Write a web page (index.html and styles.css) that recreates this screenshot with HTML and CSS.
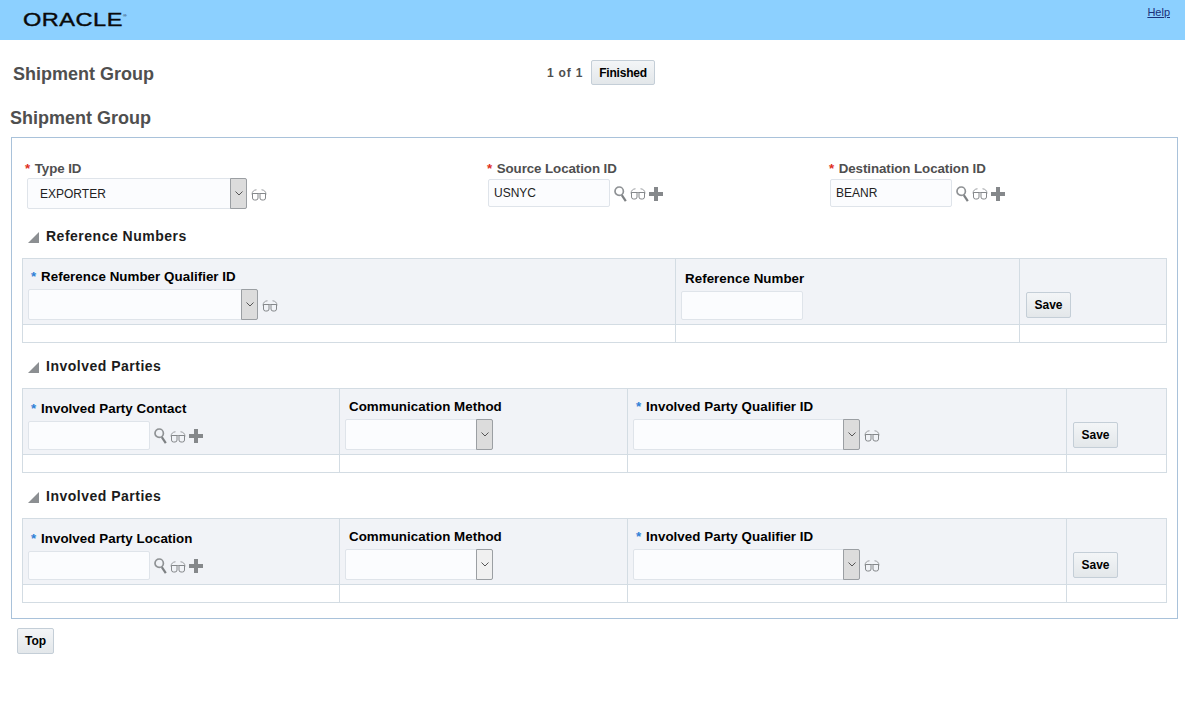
FILE: index.html
```html
<!DOCTYPE html>
<html lang="en">
<head>
<meta charset="utf-8">
<title>Shipment Group</title>
<link rel="stylesheet" href="styles.css">
</head>
<body>
<svg class="defs" width="0" height="0" aria-hidden="true">
  <defs>
    <symbol id="glasses" viewBox="0 0 16 12">
      <path d="M1 5.5C1 2.5 3 .8 5.5 .8M15 5.5C15 2.5 13 .8 10.5 .8M1 4.5h14" fill="none" stroke="#9a9da0" stroke-width="1"/>
      <path d="M1.5 4.5h5.5v4.5a2 2 0 0 1-2 2h-1.5a2 2 0 0 1-2-2zM9 4.5h5.5v4.5a2 2 0 0 1-2 2H11a2 2 0 0 1-2-2z" fill="none" stroke="#85888b" stroke-width="1"/>
    </symbol>
    <symbol id="search" viewBox="0 0 13 16">
      <circle cx="5.2" cy="5.2" r="4.2" fill="none" stroke="#8f9295" stroke-width="1.7"/>
      <path d="M7.8 9.2l4 6" stroke="#7d8083" stroke-width="2.2" fill="none"/>
    </symbol>
    <symbol id="plus" viewBox="0 0 14 14">
      <path d="M5 0h4v5h5v4H9v5H5V9H0V5h5z" fill="#85888b"/>
    </symbol>
    <symbol id="chev" viewBox="0 0 8 5">
      <path d="M.5 .5L4 4L7.5 .5" fill="none" stroke="#555" stroke-width="1"/>
    </symbol>
  </defs>
</svg>

<header class="topbar">
  <span class="logo">ORACLE<sup class="reg">®</sup></span>
  <a class="help" href="#">Help</a>
</header>

<div class="trainbar">
  <h1 class="page-title">Shipment Group</h1>
  <div class="pager">
    <span class="pager-text">1 of 1</span>
    <button class="btn btn-finish" type="button">Finished</button>
  </div>
</div>

<h2 class="section-title">Shipment Group</h2>

<main class="panel">
  <div class="form-row">
    <div class="field field-type">
      <label class="lbl"><span class="req">*</span> Type ID</label>
      <div class="ctl">
        <div class="select select-type"><span class="select-val">EXPORTER</span><span class="arrow dark"><svg class="chev"><use href="#chev"/></svg></span></div>
        <svg class="i-glasses"><use href="#glasses"/></svg>
      </div>
    </div>
    <div class="field field-src">
      <label class="lbl"><span class="req">*</span> Source Location ID</label>
      <div class="ctl">
        <div class="input input-top">USNYC</div>
        <svg class="i-search"><use href="#search"/></svg>
        <svg class="i-glasses"><use href="#glasses"/></svg>
        <svg class="i-plus"><use href="#plus"/></svg>
      </div>
    </div>
    <div class="field field-dst">
      <label class="lbl"><span class="req">*</span> Destination Location ID</label>
      <div class="ctl">
        <div class="input input-top">BEANR</div>
        <svg class="i-search"><use href="#search"/></svg>
        <svg class="i-glasses"><use href="#glasses"/></svg>
        <svg class="i-plus"><use href="#plus"/></svg>
      </div>
    </div>
  </div>

  <h3 class="sub"><span class="tri"></span>Reference Numbers</h3>
  <table class="grid grid-ref">
    <colgroup><col class="c-a"><col class="c-b"><col></colgroup>
    <tr class="head">
      <td>
        <div class="th"><span class="blue">*</span> Reference Number Qualifier ID</div>
        <div class="ctl">
          <div class="select select-lg"><span class="select-val"></span><span class="arrow dark"><svg class="chev"><use href="#chev"/></svg></span></div>
          <svg class="i-glasses"><use href="#glasses"/></svg>
        </div>
      </td>
      <td>
        <div class="th th-plain">Reference Number</div>
        <div class="ctl"><div class="input"></div></div>
      </td>
      <td><button class="btn btn-save" type="button">Save</button></td>
    </tr>
    <tr class="foot"><td></td><td></td><td></td></tr>
  </table>

  <h3 class="sub"><span class="tri"></span>Involved Parties</h3>
  <table class="grid grid-party">
    <colgroup><col class="c-1"><col class="c-2"><col class="c-3"><col></colgroup>
    <tr class="head">
      <td>
        <div class="th"><span class="blue">*</span> Involved Party Contact</div>
        <div class="ctl">
          <div class="input"></div>
          <svg class="i-search"><use href="#search"/></svg>
          <svg class="i-glasses"><use href="#glasses"/></svg>
          <svg class="i-plus"><use href="#plus"/></svg>
        </div>
      </td>
      <td>
        <div class="th th-method">Communication Method</div>
        <div class="ctl"><div class="select select-sm"><span class="select-val"></span><span class="arrow dark"><svg class="chev"><use href="#chev"/></svg></span></div></div>
      </td>
      <td>
        <div class="th th-qual"><span class="blue">*</span> Involved Party Qualifier ID</div>
        <div class="ctl">
          <div class="select select-md"><span class="select-val"></span><span class="arrow dark"><svg class="chev"><use href="#chev"/></svg></span></div>
          <svg class="i-glasses"><use href="#glasses"/></svg>
        </div>
      </td>
      <td><button class="btn btn-save" type="button">Save</button></td>
    </tr>
    <tr class="foot"><td></td><td></td><td></td><td></td></tr>
  </table>

  <h3 class="sub"><span class="tri"></span>Involved Parties</h3>
  <table class="grid grid-party">
    <colgroup><col class="c-1"><col class="c-2"><col class="c-3"><col></colgroup>
    <tr class="head">
      <td>
        <div class="th"><span class="blue">*</span> Involved Party Location</div>
        <div class="ctl">
          <div class="input"></div>
          <svg class="i-search"><use href="#search"/></svg>
          <svg class="i-glasses"><use href="#glasses"/></svg>
          <svg class="i-plus"><use href="#plus"/></svg>
        </div>
      </td>
      <td>
        <div class="th th-method">Communication Method</div>
        <div class="ctl"><div class="select select-sm"><span class="select-val"></span><span class="arrow light"><svg class="chev"><use href="#chev"/></svg></span></div></div>
      </td>
      <td>
        <div class="th th-qual"><span class="blue">*</span> Involved Party Qualifier ID</div>
        <div class="ctl">
          <div class="select select-md"><span class="select-val"></span><span class="arrow dark"><svg class="chev"><use href="#chev"/></svg></span></div>
          <svg class="i-glasses"><use href="#glasses"/></svg>
        </div>
      </td>
      <td><button class="btn btn-save" type="button">Save</button></td>
    </tr>
    <tr class="foot"><td></td><td></td><td></td><td></td></tr>
  </table>
</main>

<div class="bottom"><button class="btn" type="button">Top</button></div>
</body>
</html>
```

FILE: styles.css
```css
* { box-sizing: border-box; }
html, body { margin: 0; padding: 0; }
body {
  background: #fff;
  font-family: "Liberation Sans", Arial, sans-serif;
  font-size: 12px;
  color: #000;
  width: 1185px;
  height: 701px;
  overflow: hidden;
}
.defs { display: block; height: 0; }

.topbar {
  height: 40px;
  background: #8cd0ff;
  display: flex;
  justify-content: space-between;
  align-items: flex-start;
}
.logo {
  margin: 8px 0 0 23px;
  font-size: 19px;
  line-height: 24px;
  font-weight: 400;
  color: #0a0a0a;
  -webkit-text-stroke: .4px #0a0a0a;
  letter-spacing: .4px;
  transform: scaleX(1.24);
  transform-origin: left center;
  white-space: nowrap;
}
.reg { font-size: 4px; vertical-align: 9px; line-height: 0; -webkit-text-stroke: 0; }
.help {
  margin: 6px 15px 0 0;
  font-size: 11px;
  line-height: 13px;
  color: #1a2f7a;
  text-decoration: underline;
}

.trainbar {
  display: flex;
  padding: 20px 0 0 13px;
  height: 45px;
}
.page-title {
  margin: 0;
  width: 534px;
  font-size: 18px;
  line-height: 29px;
  height: 25px;
  font-weight: 700;
  color: #4f4f4f;
}
.pager { display: flex; align-items: center; gap: 8px; height: 25px; }
.pager-text {
  width: 36px;
  font-size: 12px;
  font-weight: 700;
  color: #4f4f4f;
  letter-spacing: .8px;
  white-space: nowrap;
}

.btn {
  height: 26px;
  padding: 0;
  border: 1px solid #c4ced7;
  border-radius: 2px;
  background: linear-gradient(#f3f5f7, #e3e7ea);
  font: 700 12px "Liberation Sans", Arial, sans-serif;
  color: #000;
}
.btn-finish { height: 25px; width: 64px; letter-spacing: -.2px; }

.section-title {
  margin: 20px 0 0 10px;
  height: 32px;
  font-size: 18px;
  line-height: 26px;
  font-weight: 700;
  color: #4f4f4f;
}

.panel {
  margin-left: 11px;
  width: 1167px;
  height: 482px;
  border: 1px solid #a9c2da;
  padding: 0 10px;
}

.form-row { display: flex; padding-top: 22px; height: 89px; }
.field-type { width: 462px; margin-left: 3px; }
.field-src { width: 342px; }
.lbl {
  display: block;
  font-size: 13.33px;
  line-height: 17px;
  font-weight: 700;
  color: #4f4f4f;
  letter-spacing: -.08px;
}
.req { color: #e0301e; margin-right: 1px; }
.blue { color: #2f7fd6; margin-right: 1px; }
.ctl { display: flex; align-items: center; }
.field-type .ctl { margin: 1px 0 0 2px; }
.field-src .ctl, .field-dst .ctl { margin: 2px 0 0 1px; }

.select {
  display: flex;
  justify-content: space-between;
  height: 31px;
  background: #fbfcfe;
  border: 1px solid #dfe4ea;
  border-radius: 2px;
}
.select-val { font-size: 12px; line-height: 30px; padding-left: 12px; color: #222; }
.select-type { width: 220px; }
.select-lg { width: 230px; }
.select-sm { width: 148px; }
.select-md { width: 227px; }
.arrow {
  width: 17px;
  margin: -1px -1px -1px 0;
  display: flex;
  align-items: center;
  justify-content: center;
  border: 1px solid #9b9fa3;
  border-radius: 0 2px 2px 0;
}
.arrow.dark { background: #dcdcdc; }
.arrow.light { background: #f0f0f0; }
.chev { width: 8px; height: 5px; }

.input {
  width: 122px;
  height: 29px;
  background: #fbfcfe;
  border: 1px solid #dfe4ea;
  border-radius: 2px;
  padding-left: 5px;
  font-size: 12px;
  line-height: 27px;
  color: #222;
}
.input-top { height: 28px; line-height: 26px; }
.i-glasses { width: 16px; height: 12px; margin: 2px 0 0 4px; flex: none; }
.i-search { width: 13px; height: 16px; margin: 1px 0 0 4px; flex: none; }
.i-plus { width: 14px; height: 14px; margin: 1px 0 0 3px; flex: none; }
.i-search + .i-glasses { margin-left: 3px; }

.sub {
  display: flex;
  align-items: center;
  margin: 0 0 13px 6px;
  height: 18px;
  font-size: 14px;
  font-weight: 700;
  letter-spacing: .5px;
  color: #1c1c1c;
}
.tri {
  width: 0;
  height: 0;
  margin: 2px 7px 0 0;
  border-style: solid;
  border-width: 0 0 11px 11px;
  border-color: transparent transparent #8c8f92 transparent;
}

.grid {
  width: 1145px;
  table-layout: fixed;
  border-collapse: collapse;
  margin-bottom: 14px;
}
.grid td { border: 1px solid #d3dce3; padding: 0 5px 4px; vertical-align: bottom; }
.grid .foot td { height: 18px; padding: 0; }
.head td { background: #f1f3f7; height: 66px; }
.c-a { width: 653px; }
.c-b { width: 344px; }
.c-1 { width: 317px; }
.c-2 { width: 288px; }
.c-3 { width: 439px; }
.th {
  font-size: 13.33px;
  line-height: 17px;
  font-weight: 700;
  letter-spacing: .05px;
  color: #000;
  margin: 0 0 4px 3px;
  white-space: nowrap;
}
.th-plain, .th-method { margin-left: 4px; }
.btn-save { margin: 0 0 2px 1px; width: 45px; }

.bottom { padding: 9px 0 0 17px; }
.bottom .btn { width: 37px; }
```
